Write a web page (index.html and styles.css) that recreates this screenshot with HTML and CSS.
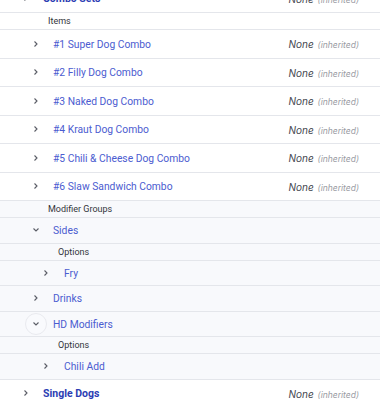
FILE: index.html
```html
<!DOCTYPE html>
<html>
<head>
<meta charset="utf-8">
<link rel="stylesheet" href="styles.css">
</head>
<body>
<div class="tree">
  <div class="row top">
    <span class="chev"><svg viewBox="0 0 8 8"><polyline points="2.5,1.5 5,4 2.5,6.5"/></svg></span>
    <span class="name bold">Combo Sets</span>
    <span class="val">None <i>(inherited)</i></span>
  </div>

  <div class="group">
    <div class="label l1">Items</div>
    <div class="row item l1"><span class="chev"><svg viewBox="0 0 8 8"><polyline points="2.5,1.5 5,4 2.5,6.5"/></svg></span><span class="name">#1 Super Dog Combo</span><span class="val">None <i>(inherited)</i></span></div>
    <div class="row item l1"><span class="chev"><svg viewBox="0 0 8 8"><polyline points="2.5,1.5 5,4 2.5,6.5"/></svg></span><span class="name">#2 Filly Dog Combo</span><span class="val">None <i>(inherited)</i></span></div>
    <div class="row item l1"><span class="chev"><svg viewBox="0 0 8 8"><polyline points="2.5,1.5 5,4 2.5,6.5"/></svg></span><span class="name">#3 Naked Dog Combo</span><span class="val">None <i>(inherited)</i></span></div>
    <div class="row item l1"><span class="chev"><svg viewBox="0 0 8 8"><polyline points="2.5,1.5 5,4 2.5,6.5"/></svg></span><span class="name">#4 Kraut Dog Combo</span><span class="val">None <i>(inherited)</i></span></div>
    <div class="row item l1"><span class="chev"><svg viewBox="0 0 8 8"><polyline points="2.5,1.5 5,4 2.5,6.5"/></svg></span><span class="name">#5 Chili &amp; Cheese Dog Combo</span><span class="val">None <i>(inherited)</i></span></div>
    <div class="row item l1"><span class="chev"><svg viewBox="0 0 8 8"><polyline points="2.5,1.5 5,4 2.5,6.5"/></svg></span><span class="name">#6 Slaw Sandwich Combo</span><span class="val">None <i>(inherited)</i></span></div>
  </div>

  <div class="group mods">
    <div class="label l1">Modifier Groups</div>
    <div class="row mod l1"><span class="chev"><svg viewBox="0 0 8 8"><polyline points="1.5,2.5 4,5 6.5,2.5"/></svg></span><span class="name">Sides</span></div>
    <div class="label l2">Options</div>
    <div class="row mod l2"><span class="chev"><svg viewBox="0 0 8 8"><polyline points="2.5,1.5 5,4 2.5,6.5"/></svg></span><span class="name">Fry</span></div>
    <div class="row mod l1"><span class="chev"><svg viewBox="0 0 8 8"><polyline points="2.5,1.5 5,4 2.5,6.5"/></svg></span><span class="name">Drinks</span></div>
    <div class="row mod l1"><span class="chev ring"><svg viewBox="0 0 8 8"><polyline points="1.5,2.5 4,5 6.5,2.5"/></svg></span><span class="name">HD Modifiers</span></div>
    <div class="label l2">Options</div>
    <div class="row mod l2"><span class="chev"><svg viewBox="0 0 8 8"><polyline points="2.5,1.5 5,4 2.5,6.5"/></svg></span><span class="name">Chili Add</span></div>
  </div>

  <div class="row top">
    <span class="chev"><svg viewBox="0 0 8 8"><polyline points="2.5,1.5 5,4 2.5,6.5"/></svg></span>
    <span class="name bold">Single Dogs</span>
    <span class="val">None <i>(inherited)</i></span>
  </div>
</div>
</body>
</html>
```

FILE: styles.css
```css
html, body {
  margin: 0;
  padding: 0;
  background: #ffffff;
  overflow: hidden;
}

.tree {
  margin-top: -15.5px;
  font-family: Roboto, "Noto Sans", sans-serif;
  width: 380px;
}

.row {
  display: flex;
  align-items: center;
  gap: 7px;
  border-bottom: 1px solid #e4e6eb;
  box-sizing: border-box;
  padding-right: 21px;
}

.row.top { height: 28.5px; padding-left: 16px; background: #fff; }
.row.item { height: 28.5px; background: #fff; }
.row.mod { height: 25.5px; }
.row.l1 { padding-left: 26px; }
.row.l2 { padding-left: 36px; gap: 8px; }

.mods { background: #f8f9fc; }

.chev {
  width: 20px;
  height: 20px;
  flex: none;
  display: flex;
  align-items: center;
  justify-content: center;
  box-sizing: border-box;
}

.chev svg {
  width: 8px;
  height: 8px;
  fill: none;
  stroke: #5a5d66;
  stroke-width: 1.1;
}

.chev.ring {
  width: 22px;
  height: 22px;
  margin: 0 -1px;
  border-radius: 50%;
  border: 1px solid #e9eaef;
  background: #f9fafd;
}

.name {
  font-size: 10.3px;
  color: #4b5cd0;
  flex: 1;
  white-space: nowrap;
  padding-top: 1px;
}

.name.bold {
  font-size: 10.5px;
  font-weight: 700;
  color: #2c3db3;
}

.val {
  font-family: Inter, "Noto Sans", sans-serif;
  font-size: 10px;
  font-style: italic;
  color: #444750;
  white-space: nowrap;
  padding-top: 1px;
}

.val i {
  font-size: 8.5px;
  color: #9a9ca3;
  margin-left: 1px;
}

.label {
  height: 17px;
  box-sizing: border-box;
  border-bottom: 1px solid #e4e6eb;
  display: flex;
  align-items: center;
  font-size: 9px;
  color: #33353b;
}

.label.l1 { padding-left: 48px; }
.label.l2 { padding-left: 58px; }
```
